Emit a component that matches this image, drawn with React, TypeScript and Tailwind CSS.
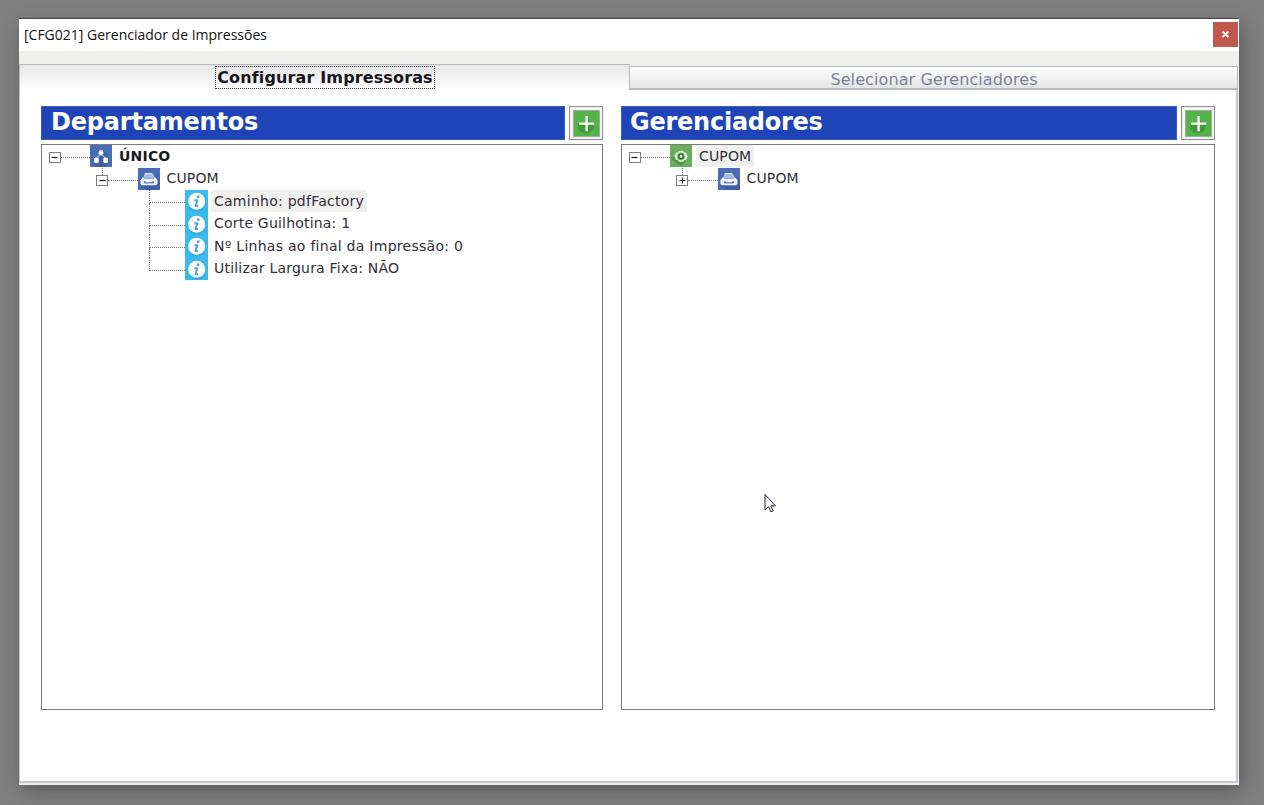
import React, { useState } from 'react';

type IconName = 'department' | 'printer' | 'info' | 'manager';

interface BranchProps {
  label: string;
  icon: IconName;
  open: boolean;
  nested?: boolean;
  selected?: boolean;
  labelClass: string;
  onToggle: () => void;
}

const details = [
  { label: 'Caminho: pdfFactory', className: 'tracking-[0.26px]' },
  { label: 'Corte Guilhotina: 1', className: 'tracking-[0.2px]' },
  { label: 'Nº Linhas ao final da Impressão: 0', className: 'tracking-[0.27px]' },
  { label: 'Utilizar Largura Fixa: NÃO', className: 'tracking-[0.21px]' }
];

const NodeIcon: React.FC<{ name: IconName }> = ({ name }) => {
  if (name === 'department') {
    return (
      <svg viewBox="0 0 22 22" className="w-[22px] h-[22px] shrink-0">
        <path fill="#4a6cb4" d="M0 0h22v22H0z" />
        <path fill="#40609f" d="M13 5l5 5v9l-3 3H7l-4-4 8-7z" />
        <path fill="none" stroke="#a3b7e0" strokeWidth="1.2" d="M11 9v2M10 10l-4 3.500M12 10l4 3.500" />
        <rect x="8.6" y="5.2" width="4.8" height="4.8" rx="1.8" fill="#fff" />
        <rect x="4" y="12.7" width="4.8" height="5.2" rx="1.4" fill="#fff" />
        <rect x="13.3" y="12.7" width="4.8" height="5.2" rx="1.4" fill="#fff" />
      </svg>
    );
  }
  if (name === 'printer') {
    return (
      <svg viewBox="0 0 22 22" className="w-[22px] h-[22px] shrink-0">
        <path fill="#4a6cb4" d="M0 0h22v22H0z" />
        <path fill="#3f5fa4" d="M16 6l6 6v8l-2 2H8l-5-5z" />
        <path fill="#a9bde6" d="M6.500 5h7.500l2 2 .5 3H5.500z" />
        <path stroke="#e6edfa" strokeWidth="1" d="M7 5.500h7" />
        <path fill="#f3f6fc" d="M4.500 9.500h13l2 2.800v3a2 2 0 01-2 2h-13a2 2 0 01-2-2v-3z" />
        <path fill="#7f98ce" d="M6 9.500h10v1.300H6z" />
        <path fill="#5f7dbe" d="M6 13.300h1.500l.8 1h5.400l.8-1H16v1.500l-.7.700H6.700l-.7-.700z" />
      </svg>
    );
  }
  if (name === 'manager') {
    return (
      <svg viewBox="0 0 22 22" className="w-[22px] h-[22px] shrink-0">
        <path fill="#69b05d" d="M0 0h22v22H0z" />
        <path fill="#4f9743" d="M7 9l-4 3-1 3 4 3 5 3 4-4 1-6z" />
        <path fill="#eaf4e7" d="M8.800 5.900h4.400l.9 1.700 1.900.3 1.700 3.400-1.700 3.400-1.900.3-.9 1.700H8.800L7.900 15 6 14.700l-1.700-3.400L6 7.900l1.900-.3z" />
        <circle cx="11" cy="11.3" r="3.900" fill="#69b05d" />
        <circle cx="11" cy="11.3" r="2.200" fill="#e3f0e0" stroke="#35672f" strokeWidth="1.4" />
      </svg>
    );
  }
  return (
    <svg viewBox="0 0 22 22" className="w-[23px] h-full shrink-0 bg-[#3bb9eb]">
      <path fill="#32addf" d="M17 5l3 4-1 8-5 4H8l-4-4z" />
      <circle cx="11.2" cy="11" r="8.3" fill="#f8fdff" />
      <circle cx="12.6" cy="6.6" r="1.4" fill="#5ba3cd" />
      <path fill="none" stroke="#5ba3cd" strokeWidth="1.9" strokeLinejoin="round" d="M9 10.100h2.800l-1.800 5.500h2.500" />
    </svg>
  );
};

const Toggle: React.FC<{ open: boolean; onClick: () => void }> = ({ open, onClick }) => (
  <button
    onClick={onClick}
    aria-expanded={open}
    className="flex items-center justify-center w-[12px] h-[11px] shrink-0 border border-[#7c7c7c] bg-white"
  >
    <svg viewBox="0 0 9 9" className="w-[9px] h-[9px] shrink-0">
      <path stroke="#1c1c1c" strokeWidth="1.2" d={open ? 'M1.500 4.500h6' : 'M1.500 4.500h6M4.500 1.500v6'} />
    </svg>
  </button>
);

const Branch: React.FC<BranchProps> = ({ label, icon, open, nested, selected, labelClass, onToggle }) => (
  <div className={`flex h-[22.5px] ${nested ? 'pl-[54px]' : 'pl-[6.5px]'}`}>
    <div className="flex flex-col items-center w-[12px] shrink-0">
      <div className={`h-[7px] shrink-0 ${nested ? 'border-l border-dotted border-[#777]' : ''}`} />
      <Toggle open={open} onClick={onToggle} />
    </div>
    <div className="w-[29.5px] h-[13px] shrink-0 border-b border-dotted border-[#777]" />
    <NodeIcon name={icon} />
    <span
      className={`flex items-center ml-[4px] px-[3px] whitespace-nowrap ${nested ? 'h-[21px]' : 'h-[22px]'} ${selected ? 'bg-[#f0f0ef]' : ''} ${labelClass}`}
    >
      {label}
    </span>
  </div>
);

const Leaf: React.FC<{ label: string; last: boolean; selected: boolean; className: string; onClick: () => void }> = ({
  label, last, selected, className, onClick
}) => (
  <div className="flex h-[22.5px] pl-[106.5px]" onClick={onClick}>
    <div className="flex flex-col w-[36px] shrink-0">
      <div className="h-[13px] shrink-0 border-l border-b border-dotted border-[#777]" />
      {!last && <div className="grow border-l border-dotted border-[#777]" />}
    </div>
    <NodeIcon name="info" />
    <span className={`flex items-center h-[22px] ml-[3.5px] px-[3px] whitespace-nowrap ${selected ? 'bg-[#f0f0ef]' : ''} ${className}`}>
      {label}
    </span>
  </div>
);

const PanelHeader: React.FC<{ title: string; className: string }> = ({ title, className }) => (
  <div className="flex h-[34px] gap-[4px]">
    <h2 className={`grow bg-[#1f44b7] border border-[#3c5cbe] text-[24px] leading-[30px] font-bold text-white ${className}`}>
      {title}
    </h2>
    <button
      aria-label="Adicionar"
      className="flex items-center justify-center w-[34px] h-[34px] shrink-0 border border-[#8e8e8e] bg-[#f3f3f3]"
    >
      <svg viewBox="0 0 27 27" className="w-[27px] h-[27px]">
        <path fill="#53b348" stroke="#a4aaa2" strokeWidth="1" d="M.5.5h26v26H.5z" />
        <path fill="#409836" d="M5 14.500h8l1-6 3 4 4 3-1 4-3 3-5 1-5-2-2-4z" />
        <path fill="#f3faf2" d="M12.400 6h2.400v6.400h6.400v2.400h-6.400v6.400h-2.400v-6.400H6v-2.400h6.400z" />
      </svg>
    </button>
  </div>
);

const App: React.FC = () => {
  const [activeTab, setActiveTab] = useState(0);
  const [rootOpen, setRootOpen] = useState(true);
  const [printerOpen, setPrinterOpen] = useState(true);
  const [managerOpen, setManagerOpen] = useState(true);
  const [couponOpen, setCouponOpen] = useState(false);
  const [selected, setSelected] = useState(0);

  return (
    <div className="relative w-[1264px] h-[805px] overflow-hidden bg-[#808080] pt-[18px] pl-[19px] font-['DejaVu_Sans',sans-serif] text-[14px] text-[#302e38]">
      <div className="flex flex-col w-[1220px] h-[767px] border-t border-[#474747] bg-[#efefee] shadow-[3px_6px_18px_0px_rgba(0,0,0,0.3)]">
        {/* Title bar */}
        <div className="flex justify-between h-[32px] shrink-0 bg-white pl-[5px] pr-px">
          <span className="font-['Open_Sans',sans-serif] text-[14px] leading-[31px] text-[#111]">
            [CFG021] Gerenciador de Impressões
          </span>
          <button aria-label="Fechar" className="flex items-center justify-center w-[25px] h-[25px] mt-[3px] bg-[#c1584f]">
            <svg viewBox="0 0 9 9" className="w-[9px] h-[9px]">
              <path stroke="#fff" strokeWidth="1.7" d="M1.500 1.500l6 5.500M7.500 1.500l-6 5.500" />
            </svg>
          </button>
        </div>

        {/* Tabs */}
        <div className="flex h-[39px] shrink-0 pt-[13px]">
          <button
            onClick={() => setActiveTab(0)}
            className="flex items-start justify-center w-[611px] h-[26px] border-t border-x border-[#b9bac1] bg-gradient-to-b from-[#e6e6e6] to-white"
          >
            <span className={`flex items-center justify-center w-[220px] h-[23px] mt-px text-[16px] font-bold text-[#18151d] tracking-[0.13px] pl-px whitespace-nowrap ${activeTab === 0 ? 'border border-dotted border-[#333]' : ''}`}>
              Configurar Impressoras
            </span>
          </button>
          <button
            onClick={() => setActiveTab(1)}
            className="flex items-center justify-center w-[608px] h-[24px] mt-[2px] border-t border-b-2 border-r border-[#b7bbc1] bg-gradient-to-b from-white to-[#e4e4e4] text-[16px] text-[#7d819c] whitespace-nowrap"
          >
            <span className="mt-[4px] ml-px tracking-[0.1px]">Selecionar Gerenciadores</span>
          </button>
        </div>

        {/* Page */}
        <div className="flex gap-[18px] w-[1219px] grow mb-[2px] border-l border-r-2 border-b-2 border-[#c3c8ce] bg-white pl-[21px] pt-[16px]">
          <section className="w-[562px] shrink-0">
            <PanelHeader title="Departamentos" className="pl-[9px] tracking-[-0.2px]" />
            <div className="h-[566px] mt-[4px] border border-[#7b7b7b] bg-white">
              <Branch
                label="ÚNICO"
                icon="department"
                open={rootOpen}
                labelClass="font-bold text-[#1b171d] tracking-[0.2px]"
                onToggle={() => setRootOpen(!rootOpen)}
              />
              {rootOpen && (
                <Branch
                  nested
                  label="CUPOM"
                  icon="printer"
                  open={printerOpen}
                  labelClass="tracking-[0.15px]"
                  onToggle={() => setPrinterOpen(!printerOpen)}
                />
              )}
              {rootOpen && printerOpen && details.map((item, index) => (
                <Leaf
                  key={item.label}
                  label={item.label}
                  last={index === details.length - 1}
                  selected={index === selected}
                  className={item.className}
                  onClick={() => setSelected(index)}
                />
              ))}
            </div>
          </section>

          <section className="w-[594px] shrink-0">
            <PanelHeader title="Gerenciadores" className="pl-[8px] tracking-[-0.25px]" />
            <div className="h-[566px] mt-[4px] border border-[#7b7b7b] bg-white">
              <Branch
                selected
                label="CUPOM"
                icon="manager"
                open={managerOpen}
                labelClass="tracking-[0.15px]"
                onToggle={() => setManagerOpen(!managerOpen)}
              />
              {managerOpen && (
                <Branch
                  nested
                  label="CUPOM"
                  icon="printer"
                  open={couponOpen}
                  labelClass="tracking-[0.15px]"
                  onToggle={() => setCouponOpen(!couponOpen)}
                />
              )}
            </div>
          </section>
        </div>
      </div>

      {/* Mouse pointer */}
      <svg viewBox="0 0 13 20" className="absolute left-[764px] top-[493px] w-[13px] h-[20px] pointer-events-none">
        <path fill="#fff" stroke="#1d1a38" strokeWidth="1" d="M1 1.500v15.500l3.500-3.300 2.300 5.100 2.300-1-2.200-4.900h4.500z" />
      </svg>
    </div>
  );
};

export default App;
